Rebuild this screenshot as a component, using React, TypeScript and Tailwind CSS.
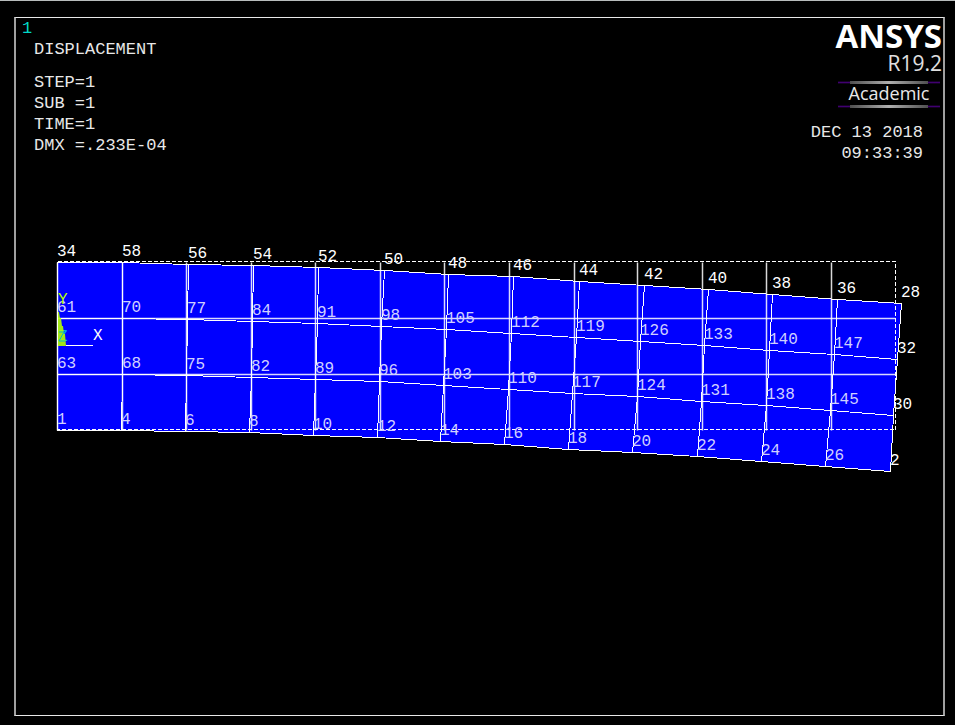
type Point = [number, number];

const mono = "font-['Liberation_Mono','Courier_New',monospace]";
const sans = "font-['Open_Sans','Noto_Sans',sans-serif]";

const columns = [57, 122, 186, 251, 315, 380, 444, 509, 574, 637, 702, 766, 831, 895];
const rows = [262, 318, 374, 430];

const rowTop: Point[] = [
  [57, 262], [122, 262], [188, 264], [253, 265], [318, 267], [384, 270], [448, 274],
  [513, 276], [579, 281], [644, 285], [708, 289], [772, 294], [837, 299], [901, 303],
];
const rowUpper: Point[] = [
  [57, 318], [122, 318], [187, 319], [252, 321], [317, 323], [381, 326], [446, 329],
  [511, 333], [576, 337], [640, 341], [704, 345], [769, 350], [834, 354], [897, 359],
];
const rowLower: Point[] = [
  [57, 374], [122, 374], [186, 375], [251, 377], [315, 379], [379, 381], [443, 385],
  [508, 389], [572, 393], [637, 396], [701, 401], [766, 405], [830, 410], [893, 415],
];
const rowBottom: Point[] = [
  [57, 430], [121, 430], [185, 431], [249, 432], [313, 435], [377, 437], [440, 441],
  [504, 444], [568, 449], [632, 452], [697, 456], [761, 461], [825, 466], [890, 471],
];
const mesh = [rowTop, rowUpper, rowLower, rowBottom];

const nodeIds = [
  [34, 58, 56, 54, 52, 50, 48, 46, 44, 42, 40, 38, 36, 28],
  [61, 70, 77, 84, 91, 98, 105, 112, 119, 126, 133, 140, 147, 32],
  [63, 68, 75, 82, 89, 96, 103, 110, 117, 124, 131, 138, 145, 30],
  [1, 4, 6, 8, 10, 12, 14, 16, 18, 20, 22, 24, 26, 2],
];

const join = (points: Point[]) => points.map((p) => p.join(",")).join(" ");
const outline = join([...rowTop, rowUpper[13], rowLower[13], ...[...rowBottom].reverse()]);

function MeshPlot() {
  return (
    <svg viewBox="16 236 927 250" className="block h-auto w-full" role="img" aria-label="Displaced mesh">
      <g transform="translate(0.5 0.5)" fill="none" stroke="white">
        <polygon points={outline} fill="#0000ff" shapeRendering="crispEdges" />
        <g strokeOpacity="0.85" strokeWidth="1.5">
          {columns.slice(0, 13).map((x) => (
            <line key={x} x1={x} x2={x} y1="262" y2="430" />
          ))}
          {rows.slice(1, 3).map((y) => (
            <line key={y} x1="57" x2="895" y1={y} y2={y} />
          ))}
        </g>
        <g shapeRendering="crispEdges">
          <path d="M57 261H895V429H57" strokeDasharray="4 2" />
          {mesh.map((row, i) => (
            <polyline key={i} points={join(row)} />
          ))}
          {columns.map((x, i) => (
            <polyline key={x} points={join(mesh.map((row) => row[i]))} />
          ))}
          <path d="M65 345H92" />
        </g>
      </g>
      <g className={`${mono} text-[16px]`} fill="white">
        <text x="58" y="341" fill="#00a8e8">Z</text>
        <path d="M58 312H59L60 318H61L62 326H63L64 334H65L66 346H58Z" fill="#b4ff00" fillOpacity="0.9" />
        <path d="M59 332H64L59 341H65" fill="none" stroke="#00b8c8" />
        {mesh.map((row, r) =>
          row.map(([x, y], c) => (
            <text key={nodeIds[r][c]} x={x} y={y - 6} fill={r === 0 || c === 13 ? "#ffffff" : "#d0d0ff"}>
              {nodeIds[r][c]}
            </text>
          )),
        )}
        <text x="93" y="340">X</text>
        <text x="58" y="304" fill="#b4ff00">Y</text>
      </g>
    </svg>
  );
}

function Rule() {
  return (
    <div className="flex h-[3px] w-[102px] items-center bg-linear-to-b from-transparent via-[#400070] to-transparent px-3">
      <div className="h-full w-full bg-linear-to-r from-[#505050] via-[#b0b0b0] to-[#505050]" />
    </div>
  );
}

export default function App() {
  return (
    <div className="flex min-h-screen flex-col border-t border-[#b8bcbc] bg-black pt-4 pr-[10px] pb-[9px] pl-[14px] text-white">
      <main className="flex flex-1 flex-col border-x-2 border-y border-x-[#a0a0a0] border-y-[#e8e8e8]">
        <header className="flex h-[218px] justify-between">
          <div className={`${mono} pl-[6px] text-[17px] leading-[21px] whitespace-pre text-[#e8e8e8]`}>
            <p className="text-[#00d8c8]">1</p>
            <div className="pl-3">
              <h1>DISPLACEMENT</h1>
              <div className="pt-3">
                <p>STEP=1</p>
                <p>SUB =1</p>
                <p>TIME=1</p>
                <p>DMX =.233E-04</p>
              </div>
            </div>
          </div>
          <div className="flex flex-col items-end">
            <div className={`${sans} flex flex-col items-end pr-px`}>
              <p className="text-[33px] leading-[35px] font-bold">ANSYS</p>
              <p className="text-[21px] leading-[20px] text-[#e0e0e0]">R19.2</p>
            </div>
            <div className="flex flex-col items-center pt-2 pr-[3px]">
              <Rule />
              <p className={`${sans} pb-[3px] text-[18px] leading-[18px] text-[#e8e8e8]`}>Academic</p>
              <Rule />
            </div>
            <div className={`${mono} pt-[14px] pr-5 text-right text-[17px] leading-[21px] text-[#e8e8e8]`}>
              <p>DEC 13 2018</p>
              <p>09:33:39</p>
            </div>
          </div>
        </header>
        <MeshPlot />
      </main>
    </div>
  );
}
